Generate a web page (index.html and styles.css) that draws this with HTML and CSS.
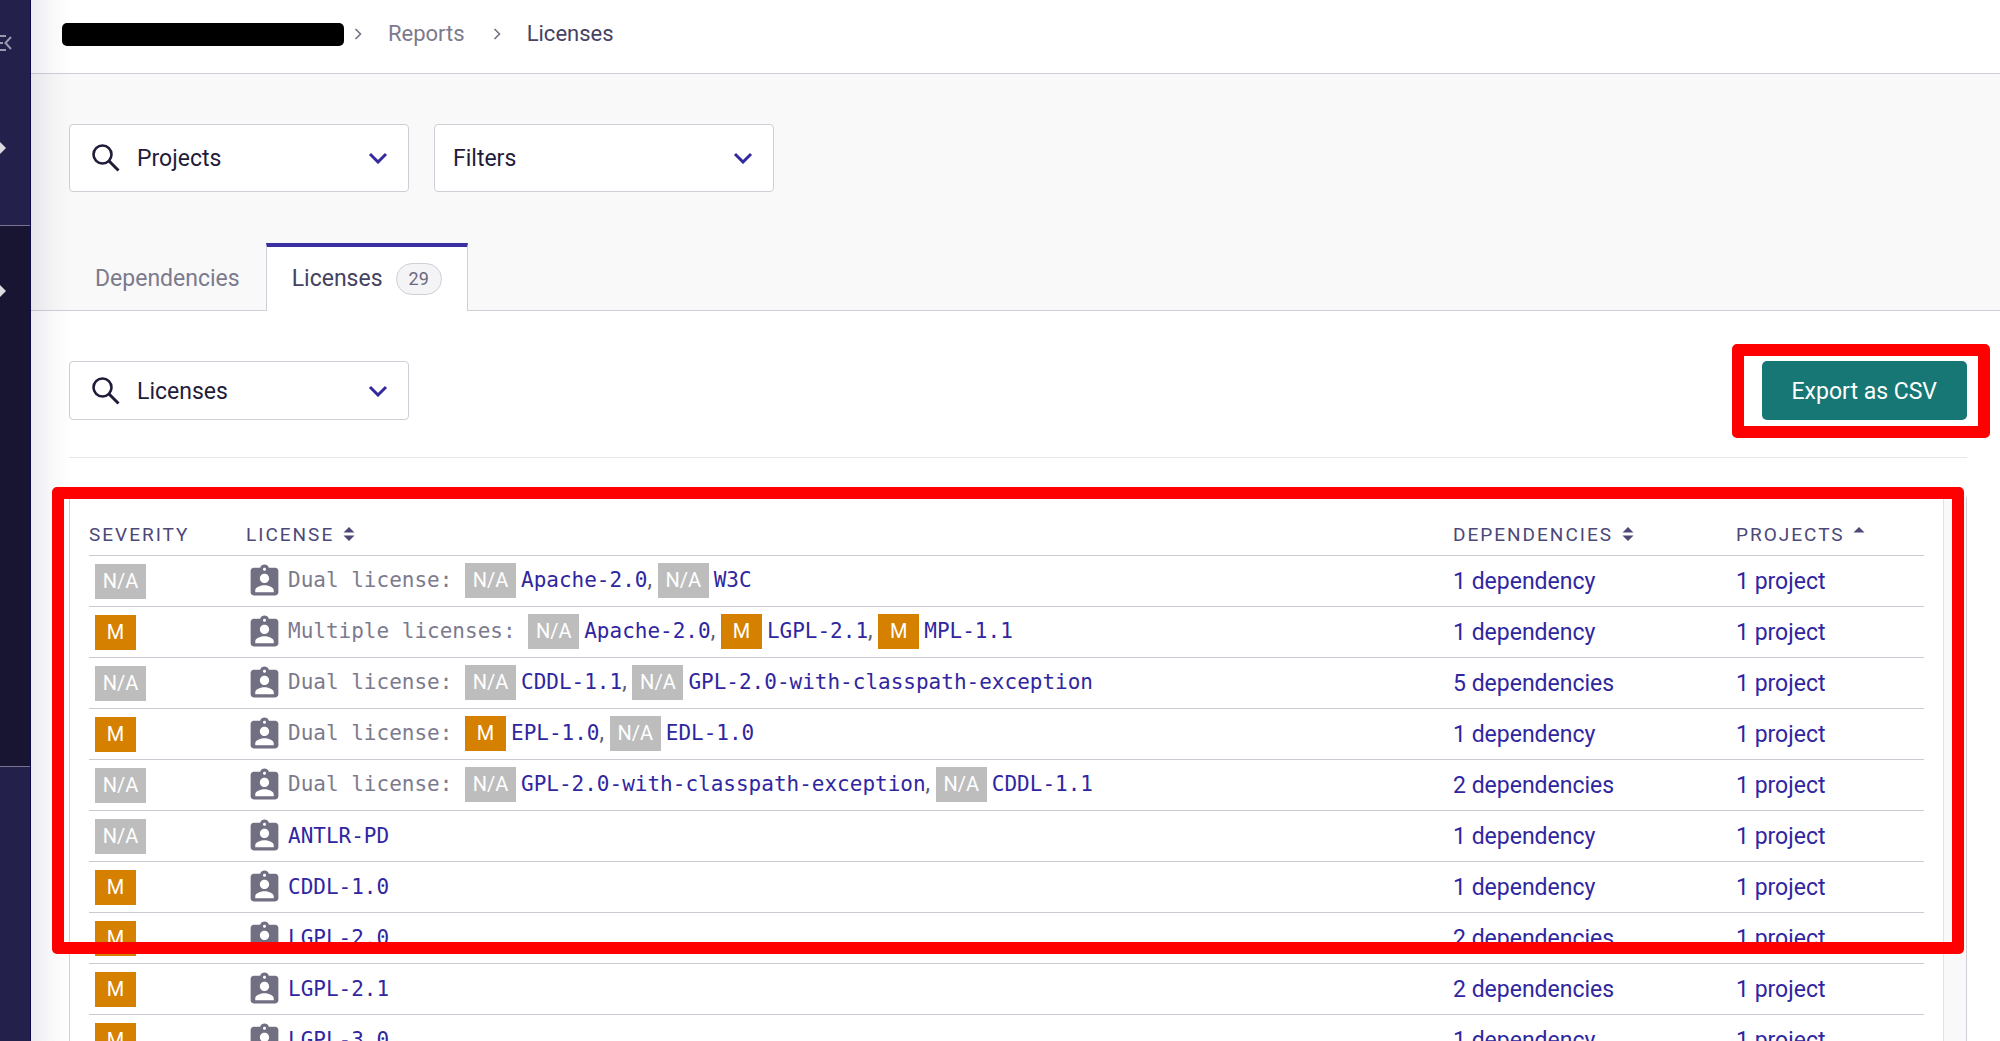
FILE: index.html
```html
<!DOCTYPE html>
<html lang="en">
<head>
<meta charset="utf-8">
<title>Licenses report</title>
<link rel="stylesheet" href="styles.css">
</head>
<body>
<svg class="defs" aria-hidden="true">
  <symbol id="search" viewBox="0 0 28 28"><circle cx="10.500" cy="10.500" r="9" fill="none" stroke="currentColor" stroke-width="2.600"/><path d="M17 17L26.500 26.500" stroke="currentColor" stroke-width="3"/></symbol>
  <symbol id="down" viewBox="0 0 20 12"><path d="M2 2l8 8 8-8" fill="none" stroke="currentColor" stroke-width="3"/></symbol>
  <symbol id="next" viewBox="0 0 8 12"><path d="M1.500 1l5 5-5 5" fill="none" stroke="currentColor" stroke-width="1.600"/></symbol>
  <symbol id="sort" viewBox="0 0 12 14"><path d="M6 0l5.500 5.500H.5zM6 14L.5 8.500h11z" fill="currentColor"/></symbol>
  <symbol id="asc" viewBox="0 0 12 14"><path d="M6 0l5.500 5.500H.5z" fill="currentColor"/></symbol>
  <symbol id="license" viewBox="0 0 24 24"><path fill="currentColor" d="M19 3h-4.180C14.400 1.840 13.300 1 12 1c-1.300 0-2.400.84-2.820 2H5c-1.100 0-2 .9-2 2v14c0 1.100.9 2 2 2h14c1.100 0 2-.9 2-2V5c0-1.100-.9-2-2-2zm-7 0c.55 0 1 .45 1 1s-.45 1-1 1-1-.45-1-1 .45-1 1-1zm0 4c1.660 0 3 1.340 3 3s-1.340 3-3 3-3-1.340-3-3 1.340-3 3-3zm6 12H6v-1.400c0-2 4-3.100 6-3.100s6 1.100 6 3.100V19z"/></symbol>
</svg>
<div class="app">
  <aside class="sidebar" aria-label="Navigation">
    <div class="side-section side-top">
      <button class="side-btn" aria-label="Collapse menu"><svg width="12" height="18" viewBox="0 0 12 18"><path d="M0 2h6M0 9h3M0 16h6M11 3L5.500 9l5.500 6" fill="none" stroke="currentColor" stroke-width="2"/></svg></button>
      <button class="side-btn" aria-label="Expand organization"><svg width="6" height="12" viewBox="0 0 6 12"><path d="M0 0l6 6-6 6z" fill="currentColor"/></svg></button>
    </div>
    <div class="side-section side-mid">
      <button class="side-btn" aria-label="Expand group"><svg width="6" height="12" viewBox="0 0 6 12"><path d="M0 0l6 6-6 6z" fill="currentColor"/></svg></button>
    </div>
    <div class="side-section side-end"></div>
  </aside>
  <div class="page">
    <nav class="crumbs" aria-label="Breadcrumb">
      <span class="redacted"></span>
      <svg class="sep"><use href="#next"/></svg>
      <a href="#reports">Reports</a>
      <svg class="sep"><use href="#next"/></svg>
      <span class="current">Licenses</span>
    </nav>
    <header class="toolbar">
      <div class="filters">
        <div class="field tall">
          <svg class="field-icon"><use href="#search"/></svg>
          <select class="with-icon" aria-label="Projects"><option>Projects</option></select>
          <svg class="field-arrow"><use href="#down"/></svg>
        </div>
        <div class="field tall">
          <select aria-label="Filters"><option>Filters</option></select>
          <svg class="field-arrow"><use href="#down"/></svg>
        </div>
      </div>
      <nav class="tabs" aria-label="Report type">
        <a class="tab" href="#dependencies">Dependencies</a>
        <a class="tab active" href="#licenses">Licenses <span class="count">29</span></a>
      </nav>
    </header>
    <main class="content">
      <div class="actions">
        <div class="field">
          <svg class="field-icon"><use href="#search"/></svg>
          <select class="with-icon" aria-label="Licenses"><option>Licenses</option></select>
          <svg class="field-arrow"><use href="#down"/></svg>
        </div>
        <div class="export-wrap"><button class="export">Export as CSV</button><span class="mark mark-export"></span></div>
      </div>
      <section class="card">
        <div class="table-area">
          <table>
            <colgroup><col class="c-sev"><col><col class="c-dep"><col class="c-proj"></colgroup>
            <thead><tr><th scope="col">Severity</th><th scope="col">License <svg class="sort"><use href="#sort"/></svg></th><th scope="col">Dependencies <svg class="sort"><use href="#sort"/></svg></th><th scope="col">Projects <svg class="sort"><use href="#asc"/></svg></th></tr></thead>
            <tbody>
              <tr><td><span class="sev na">N/A</span></td><td><div class="lic"><svg><use href="#license"/></svg><div><span class="kind">Dual license: </span><span class="sev na">N/A</span><a class="mono" href="#l">Apache-2.0</a>, <span class="sev na">N/A</span><a class="mono" href="#l">W3C</a></div></div></td><td><a href="#d">1 dependency</a></td><td><a href="#p">1 project</a></td></tr>
              <tr><td><span class="sev med">M</span></td><td><div class="lic"><svg><use href="#license"/></svg><div><span class="kind">Multiple licenses: </span><span class="sev na">N/A</span><a class="mono" href="#l">Apache-2.0</a>, <span class="sev med">M</span><a class="mono" href="#l">LGPL-2.1</a>, <span class="sev med">M</span><a class="mono" href="#l">MPL-1.1</a></div></div></td><td><a href="#d">1 dependency</a></td><td><a href="#p">1 project</a></td></tr>
              <tr><td><span class="sev na">N/A</span></td><td><div class="lic"><svg><use href="#license"/></svg><div><span class="kind">Dual license: </span><span class="sev na">N/A</span><a class="mono" href="#l">CDDL-1.1</a>, <span class="sev na">N/A</span><a class="mono" href="#l">GPL-2.0-with-classpath-exception</a></div></div></td><td><a href="#d">5 dependencies</a></td><td><a href="#p">1 project</a></td></tr>
              <tr><td><span class="sev med">M</span></td><td><div class="lic"><svg><use href="#license"/></svg><div><span class="kind">Dual license: </span><span class="sev med">M</span><a class="mono" href="#l">EPL-1.0</a>, <span class="sev na">N/A</span><a class="mono" href="#l">EDL-1.0</a></div></div></td><td><a href="#d">1 dependency</a></td><td><a href="#p">1 project</a></td></tr>
              <tr><td><span class="sev na">N/A</span></td><td><div class="lic"><svg><use href="#license"/></svg><div><span class="kind">Dual license: </span><span class="sev na">N/A</span><a class="mono" href="#l">GPL-2.0-with-classpath-exception</a>, <span class="sev na">N/A</span><a class="mono" href="#l">CDDL-1.1</a></div></div></td><td><a href="#d">2 dependencies</a></td><td><a href="#p">1 project</a></td></tr>
              <tr><td><span class="sev na">N/A</span></td><td><div class="lic"><svg><use href="#license"/></svg><div><a class="mono" href="#l">ANTLR-PD</a></div></div></td><td><a href="#d">1 dependency</a></td><td><a href="#p">1 project</a></td></tr>
              <tr><td><span class="sev med">M</span></td><td><div class="lic"><svg><use href="#license"/></svg><div><a class="mono" href="#l">CDDL-1.0</a></div></div></td><td><a href="#d">1 dependency</a></td><td><a href="#p">1 project</a></td></tr>
              <tr><td><span class="sev med">M</span></td><td><div class="lic"><svg><use href="#license"/></svg><div><a class="mono" href="#l">LGPL-2.0</a></div></div></td><td><a href="#d">2 dependencies</a></td><td><a href="#p">1 project</a></td></tr>
              <tr><td><span class="sev med">M</span></td><td><div class="lic"><svg><use href="#license"/></svg><div><a class="mono" href="#l">LGPL-2.1</a></div></div></td><td><a href="#d">2 dependencies</a></td><td><a href="#p">1 project</a></td></tr>
              <tr><td><span class="sev med">M</span></td><td><div class="lic"><svg><use href="#license"/></svg><div><a class="mono" href="#l">LGPL-3.0</a></div></div></td><td><a href="#d">1 dependency</a></td><td><a href="#p">1 project</a></td></tr>
            </tbody>
          </table>
        </div>
        <div class="track"></div>
        <span class="mark mark-table"></span>
      </section>
    </main>
  </div>
</div>
</body>
</html>
```
FILE: styles.css
```css
* { box-sizing: border-box; }
body {
  margin: 0;
  font: 23px/28px Roboto, "Liberation Sans", sans-serif;
  color: #1f1c3a;
  background: #fff;
}
a { color: #3026a0; text-decoration: none; }
button, select { font: inherit; color: inherit; }
.defs { display: none; }

.app { display: flex; height: 100vh; overflow: hidden; }

/* Sidebar */
.sidebar {
  flex: 0 0 31px;
  display: flex;
  flex-direction: column;
  border-right: 1px solid #0d0a4a;
  background: #23204b;
}
.side-section { display: flex; flex-direction: column; align-items: flex-start; }
.side-top { height: 225px; padding-top: 34px; gap: 90px; }
.side-mid { height: 542px; padding-top: 59px; background: #181533; border: solid #77758c; border-width: 1px 0; }
.side-btn { display: flex; padding: 0; border: 0; background: none; color: #dcdbe2; }
.side-btn:first-child:not(:last-child) { color: #9b99ac; }

/* Page */
.page {
  flex: 1;
  min-width: 0;
  display: flex;
  flex-direction: column;
  position: relative;
}
.page::before {
  content: "";
  position: absolute;
  inset: 0 auto 0 0;
  width: 40px;
  background: linear-gradient(to right, rgba(40, 35, 90, .09), rgba(40, 35, 90, .03) 50%, rgba(40, 35, 90, 0));
  pointer-events: none;
}
.crumbs {
  flex: none;
  display: flex;
  align-items: center;
  height: 74px;
  padding: 0 31px 5px;
  border-bottom: 1px solid #d0cfd8;
  font-size: 22px;
}
.crumbs a { color: #7c7a8d; margin: 0 28px 0 26px; }
.crumbs .current { color: #454262; margin-left: 26px; }
.redacted { width: 282px; height: 23px; margin-right: 10px; border-radius: 5px; background: #000; }
.sep { width: 8px; height: 12px; color: #727084; }

.toolbar { flex: none; padding-top: 50px; background: #f9f9f9; }
.filters { display: flex; gap: 25px; padding: 0 38px; }
.field { display: grid; grid-template-columns: 68px 1fr 41px; align-items: center; width: 340px; color: #1f1c3a; }
.field select {
  grid-area: 1 / 1 / 2 / 4;
  height: 59px;
  padding: 2px 18px 0;
  border: 1px solid #cfced6;
  border-radius: 4px;
  background: #fff;
  appearance: none;
}
.field.tall select { height: 68px; }
.field select.with-icon { padding-left: 67px; }
.field svg { z-index: 1; pointer-events: none; }
.field-icon { grid-area: 1 / 1; width: 28px; height: 28px; margin-left: 23px; }
.field-arrow { grid-area: 1 / 3; width: 20px; height: 12px; color: #342a9f; }

.tabs { display: flex; padding: 51px 38px 0; border-bottom: 1px solid #d0cfd8; }
.tab {
  display: flex;
  align-items: center;
  height: 67px;
  padding: 4px 26px 0;
  color: #7c7a8d;
}
.tab.active {
  height: 68px;
  margin-bottom: -1px;
  padding: 0 25px;
  border: 1px solid #d0cfd8;
  border-top: 4px solid #3a30a3;
  border-bottom: 0;
  background: #fff;
  color: #454262;
}
.count {
  margin-left: 13px;
  padding: 0 12px;
  border: 1px solid #d0cfd8;
  border-radius: 16px;
  background: #f4f4f6;
  color: #6b687e;
  font-size: 18px;
  line-height: 30px;
}

.content { flex: 1; display: flex; flex-direction: column; padding: 50px 33px 0 38px; }
.actions { display: flex; justify-content: space-between; padding-bottom: 37px; border-bottom: 1px solid #e7e7ea; }
.export-wrap { position: relative; }
.export { height: 59px; padding: 2px 30px 0; border: 0; border-radius: 5px; background: #167774; color: #fff; }

.card {
  position: relative;
  flex: 1;
  display: flex;
  margin-top: 36px;
  border: 1px solid #d0cfd8;
  border-bottom: 0;
  border-radius: 5px 5px 0 0;
}
.table-area { flex: 1; padding: 0 19px; }
.track { width: 23px; border-left: 1px solid #e3e3e6; background: #f9f9fa; }

table { width: 100%; border-collapse: collapse; table-layout: fixed; }
.c-sev { width: 157px; }
.c-dep { width: 283px; }
.c-proj { width: 188px; }
th {
  height: 60px;
  padding: 20px 0 0;
  border-bottom: 1px solid #cbcad2;
  color: #4c4878;
  font-size: 19px;
  font-weight: 400;
  letter-spacing: 2px;
  text-align: left;
  text-transform: uppercase;
}
.sort { width: 12px; height: 14px; margin-left: 2px; }
td { height: 51px; padding: 2px 0 0; border-bottom: 1px solid #cbcad2; white-space: nowrap; }
.lic { display: flex; align-items: center; gap: 5px; color: #5f5c74; }
.lic svg { width: 37px; height: 37px; color: #716f82; }
.lic div { padding-bottom: 2px; }
.kind, .mono { font-family: "DejaVu Sans Mono", monospace; font-size: 21px; }
.kind { white-space: pre; color: #7c7a8d; }
.sev {
  display: inline-block;
  width: 51px;
  color: #fff;
  font-size: 20px;
  line-height: 35px;
  text-align: center;
}
.na { background: #bdbdbd; }
.med { width: 41px; background: #d68000; }
td > .sev { margin-left: 6px; }
.lic .sev { margin-right: 5px; }

/* Highlights over the page */
.mark { position: absolute; border: 12px solid #f00; border-radius: 5px; pointer-events: none; }
.mark-export { inset: -17px -23px -18px -30px; }
.mark-table { top: -8px; left: -18px; right: 2px; height: 467px; }
```
